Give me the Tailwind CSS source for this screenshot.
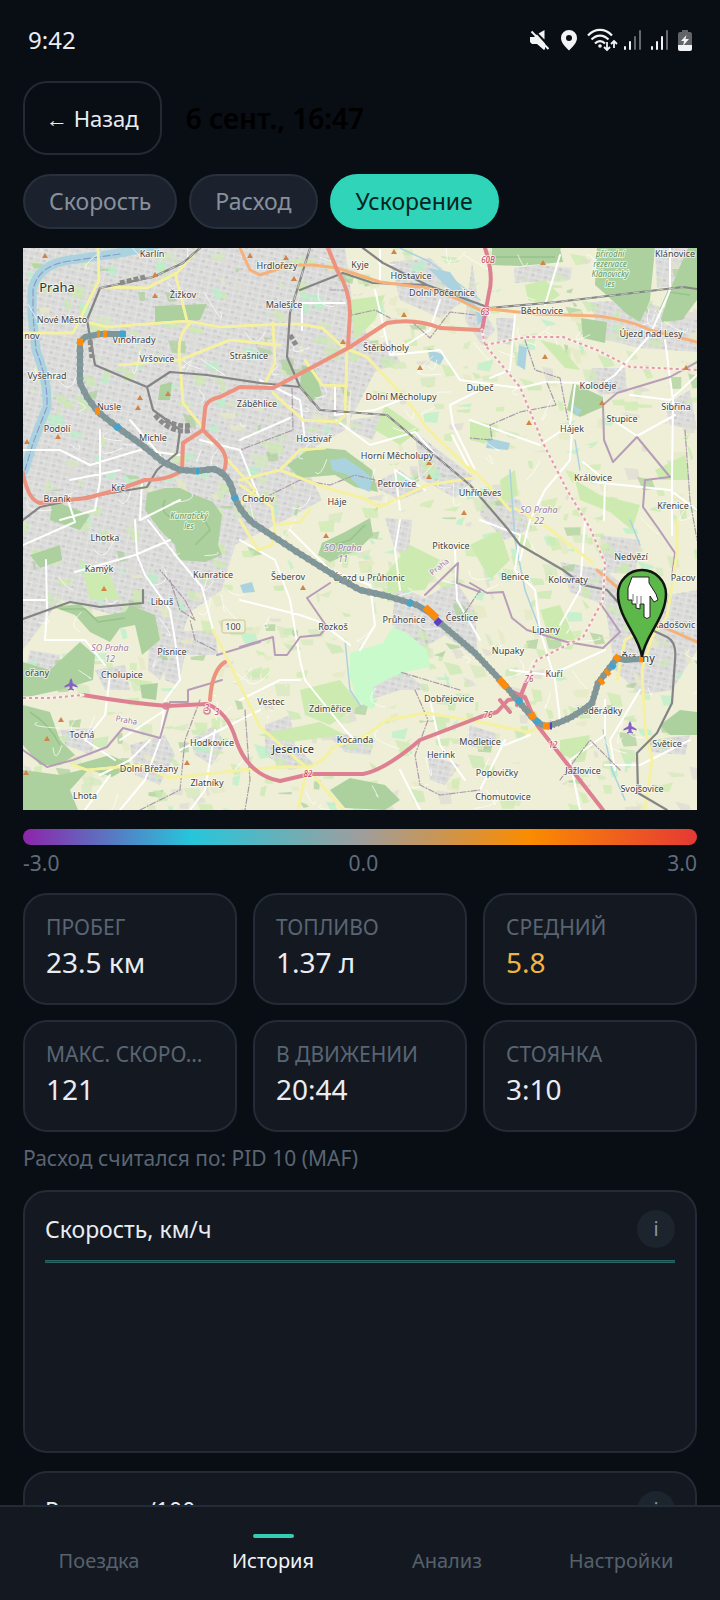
<!DOCTYPE html>
<html lang="ru">
<head>
  <meta charset="UTF-8">
  <meta name="viewport" content="width=device-width, initial-scale=1.0">
  <title>Поездка — 6 сент., 16:47</title>
  <script src="https://cdn.jsdelivr.net/npm/@tailwindcss/browser@4"></script>
</head>
<body class="bg-[#090d14] text-[#e9edf3] font-['Noto_Sans',sans-serif]">
<div class="h-screen flex flex-col overflow-hidden">

  <!-- status bar -->
  <div class="shrink-0 h-[81px] pb-[2px] pl-7 pr-[27px] flex items-center justify-between">
    <span class="text-2xl">9:42</span>
    <div class="flex items-center text-[#f1f3f5]">
      <svg class="w-[22px] h-6 mr-[10px]" viewBox="0 0 22 24" fill="currentColor">
        <path d="M1 9h4l3-2.500 8 9V21l-1 1-7-6H3l-2-2zM9.500 5.500 15.500 2v9.500z"/>
        <path d="M2.500 3.500 19.500 21" stroke="currentColor" stroke-width="2"/>
      </svg>
      <svg class="w-4 h-6 mr-[10px]" viewBox="0 0 16 24" fill="currentColor" fill-rule="evenodd">
        <path d="M8 2a8 8 0 0 1 8 8c0 4.500-4 8.500-8 12.500C4 18.500 0 14.500 0 10a8 8 0 0 1 8-8zm0 5a3 3 0 1 0 0 6 3 3 0 0 0 0-6z"/>
      </svg>
      <svg class="w-[31px] h-6 mr-[5px]" viewBox="0 0 31 24" fill="none" stroke="currentColor" stroke-width="2.200">
        <path d="M1 7.500c7-7.500 17-7.500 24 0M4.500 11.500c5-5.200 12-5.200 17 0M8 15.500c3-3.300 7-3.300 10 0"/>
        <circle cx="13" cy="18" r="1.800" fill="currentColor" stroke="none"/>
        <path d="M20 14v8m-3-3 3 3 3-3M27 20v-7m-3 3 3-3 3 3" stroke-width="1.800"/>
      </svg>
      <svg class="w-[19px] h-6 mr-2" viewBox="0 0 19 24" fill="currentColor">
        <rect x="1" y="18" width="2" height="4" rx="1"/><rect x="6" y="13" width="2" height="9" rx="1"/>
        <rect x="11" y="8" width="2" height="14" rx="1" opacity=".4"/><rect x="16" y="2" width="2" height="20" rx="1" opacity=".4"/>
      </svg>
      <svg class="w-[19px] h-6 mr-2" viewBox="0 0 19 24" fill="currentColor">
        <rect x="1" y="18" width="2" height="4" rx="1"/><rect x="6" y="13" width="2" height="9" rx="1"/>
        <rect x="11" y="8" width="2" height="14" rx="1"/><rect x="16" y="2" width="2" height="20" rx="1" opacity=".4"/>
      </svg>
      <svg class="w-4 h-6" viewBox="0 0 16 24" fill="currentColor">
        <path d="M5 2h6v2h2a2 2 0 0 1 2 2v14a2 2 0 0 1-2 2H3a2 2 0 0 1-2-2V6a2 2 0 0 1 2-2h2z" opacity=".38"/>
        <path d="M1 17h14v4a2 2 0 0 1-2 2H3a2 2 0 0 1-2-2z"/>
        <path d="M9.500 7 4 13h3l-1 5 6-7H8.500z"/>
      </svg>
    </div>
  </div>

  <main class="flex-1 min-h-0 overflow-y-auto [scrollbar-width:none] px-[23px]">
    <div class="flex items-center gap-6">
      <button class="h-[74px] px-[21px] border-2 border-[#222a33] rounded-3xl text-[22px]">← Назад</button>
      <h1 class="text-[28px] font-semibold text-black">6 сент., 16:47</h1>
    </div>

    <div class="flex gap-3 mt-[19px] text-[23px]">
      <button class="h-[55px] px-6 rounded-full border-2 border-[#27303b] bg-[#1c222d] text-[#87909d]">Скорость</button>
      <button class="h-[55px] px-6 rounded-full border-2 border-[#27303b] bg-[#1c222d] text-[#87909d]">Расход</button>
      <button class="h-[55px] px-6 rounded-full border-2 border-[#2fd4b9] bg-[#2fd4b9] text-[#06231f]">Ускорение</button>
    </div>

    <!-- map -->
    <svg class="block w-full mt-[19px] font-['Noto_Sans',sans-serif]" viewBox="23 248 674 562" role="img" aria-label="Карта поездки">
      <defs>
        <pattern id="streets" width="13" height="11" patternUnits="userSpaceOnUse" patternTransform="rotate(12)">
          <rect width="13" height="11" fill="#d8d8d7"/>
          <path d="M0 2h13M0 7h13M3 0v11M9 0v7" stroke="#e9e9e8" stroke-width=".8"/>
          <path d="M5 4h3M10 9h2" stroke="#c8c7c7" stroke-width="1.500"/>
        </pattern>
      </defs>
      <rect x="23" y="248" width="674" height="562" fill="#eeefd6"/>

      <g fill="url(#streets)">
        <path d="M23 248H345L352 300 372 345 352 380 345 430 300 455 322 500 285 520 235 545 222 590 190 612 180 640 160 680 148 670 150 625 60 600 23 650z"/>
        <path d="M390 262 430 258 455 280 465 300 440 318 400 300zM352 352 390 340 400 362 375 372 350 420 385 415 372 440 350 430zM415 432 475 478 455 498 420 478zM472 262 478 300 495 330 482 345 465 320zM514 268 540 265 572 268 570 280 515 283zM496 318 515 318 510 345 498 342zM590 302 640 300 697 320V352L640 348 600 338zM592 368 625 368 627 392 600 395 588 380zM655 248H688L680 285 657 288zM484 488 520 500 532 528 505 540 480 515zM665 405 690 390 697 430 670 425z"/>
        <path d="M560 562 605 570 640 600 697 590V650L672 690 640 695 615 670 605 605 570 592zM395 585 425 598 455 580 475 610 478 660 445 635 420 650 392 625zM370 685 405 672 428 690 400 690 370 700zM600 535 640 540 635 575 605 572zM370 485 400 470 425 490 400 500z"/>
        <path d="M160 632 215 630 218 655 185 655 178 685 165 680zM190 740 215 725 225 745 212 765 195 755zM130 745 165 735 175 755 160 785 135 775zM265 725 290 715 295 745 315 765 290 770 265 755zM30 650 60 655 58 670 23 680zM60 730 95 728 92 755 65 745zM428 755 460 765 445 785 430 780zM650 740 690 735 685 755 650 752zM322 730 375 740 370 755 345 752zM470 725 500 735 490 750 465 745zM95 670 125 665 130 690 105 690zM385 518 412 520 408 560 395 550z"/>
      </g>

      <g id="patches"></g>

      <g fill="#add19e">
        <path d="M597 248H655L650 300 640 322 628 315 612 300 595 285zM688 248H697V300L682 320 660 322 672 285zM492 248H560L563 262 520 266 492 265zM581 318 607 322 605 343 583 338zM573 383 603 397V407L580 417 567 410z"/>
        <path d="M147 493 165 488 180 488 195 495 213 502 222 515 218 545 222 555 205 562 178 560 175 545 160 530 145 510z"/>
        <path d="M287 465 312 447 345 450 372 470 378 492 355 487 335 475 300 478zM318 555 322 543 345 532 370 518 373 535 358 550 330 562zM53 607 80 604 95 617 125 612 130 605 155 615 160 640 142 655 135 625 120 628 110 642 90 632 75 615z"/>
        <path d="M23 662 50 670 80 642 95 655 93 680 60 690 23 698zM23 705 50 712 60 740 75 755 60 765 40 765 23 745zM23 770 60 775 90 768 70 790 78 810H23zM75 765 110 755 133 765 112 777zM330 790 350 778 385 785 400 800 385 810 345 808zM660 725 680 710 697 712V735L670 735zM155 306 207 304 200 320 155 322zM302 365 315 370 322 395 310 402 300 385zM160 385 172 382 170 400 158 400zM160 500 175 510 170 525 158 515zM140 685 158 683 156 700 142 698zM52 500 90 515 80 530 50 520zM30 555 60 545 62 560 40 568z"/>
      </g>
      <g fill="none" stroke="#97c28a" stroke-width="1.500">
        <path d="M165 500Q158 515 178 520L200 512 210 530 195 545M60 609 85 609 98 622 125 618M30 712Q50 725 60 745M495 257 555 257M660 310 668 292 690 295M325 548 350 540 365 525"/>
      </g>
      <g fill="#cdebb0">
        <path d="M350 300 385 295 375 320 355 340zM525 285 545 280 560 295 545 305 528 300zM540 340 560 345 580 370 565 368zM385 405 420 430 400 445 375 430zM300 690 340 680 360 705 330 725 305 715zM258 735 320 722 345 735 290 742zM470 545 500 530 510 560 490 580zM575 480 600 495 640 505 632 530 610 512 580 500zM540 610 560 605 575 640 550 640zM655 470 685 455 690 480 660 480zM470 420 495 425 490 445 470 440zM500 480 515 470 518 495 503 505zM560 740 590 735 585 760 560 755zM440 560 425 590 388 592 385 575 410 545zM80 560 110 575 120 600 90 600z"/>
      </g>
      <path d="M350 653 383 643 393 627 407 633 427 650 430 667 400 673 373 687V710L357 700 350 677z" fill="#c8facc"/>
      <g fill="#aad3df">
        <path d="M330 460 345 458 360 468 372 478 370 492 360 488 348 475 332 470zM519 345 527 348 525 370 517 365zM430 350 445 355 440 365 430 360zM488 438 510 443 508 450 486 448zM476 312 488 316 478 325zM240 585 252 582 255 592 243 593zM428 268 450 272 470 300 478 308 465 303 445 285zM572 405 582 410 577 416z"/>
      </g>
      <g fill="none" stroke-linecap="round" stroke-linejoin="round">
        <path d="M155 246 120 253 70 260Q38 264 32 290L32 315 36 350Q48 380 47 407L33 443 23 475" stroke="#aad3df" stroke-width="9"/>
        <path d="M120 254 70 261Q38 265 33 290L33 315 36 350Q48 380 47 407L33 443 25 470" stroke="#8e9ad0" stroke-width="1.200" stroke-dasharray="7 3"/>
        <path d="M480 300 430 262 400 248M510 470 515 540 525 590 540 630M575 440 580 470M630 520 640 545M345 640 350 690 362 708M603 730 612 770 625 800" stroke="#aad3df" stroke-width="1.500"/>

        <g stroke="#fff" stroke-width="2">
          <path d="M148 520 177 557 202 587 213 630M23 545 75 522 68 500M75 572 135 555 170 540M135 520 137 555 145 575 170 610 175 640 180 680 165 700 160 740 145 780 120 810M46 560 47 610 45 640 85 640 105 665M23 600 45 600M110 675 105 715 85 740 115 760M23 450 60 450 90 465 140 450 180 455M100 430 100 480 95 510 60 520M130 420 160 455M70 480 120 470M142 480 140 520 180 500M260 380 300 400 305 440M200 440 240 450 260 500M240 440 290 418M345 303H302V330M380 250V280M375 290 390 355 430 330 440 300M390 355 440 350 460 380 520 388 545 382 590 383M335 385 335 415 375 410 400 400M336 420 370 445 415 432 440 460M452 435 470 470M515 315 510 370 490 378M545 305 560 255M670 248V290L650 335 615 375 600 385M630 395 670 400 697 375M665 340 673 400 672 480 672 535M572 430 570 460 545 490 530 520 520 560M543 443 570 425 575 385M480 390 450 405 453 425 475 470M470 420 540 445M613 420 637 436 675 415M593 482 670 490 697 510M583 462 605 480 604 520M400 510 395 470 425 490M240 540 275 560 290 600 300 660 305 680 345 730 355 740M240 600 300 615 320 622 350 645M290 530 330 570 370 585 375 625 360 650M400 520 395 550 400 590M480 520 520 535 515 570 535 590 540 630 555 680 560 720M455 550 457 600 480 640M585 520 580 590 560 625M605 650 550 675 510 670M605 700 605 735 570 760 580 810M640 690 610 740 615 770M605 765 640 765 690 740M165 710 120 740M180 750 220 730 260 710M215 730 205 790 190 810M100 775 130 760 150 740M85 810 110 775M400 770 415 800 420 810M430 700 440 745 465 780M505 740 480 790M530 735 505 745M240 700 280 680 300 680"/>
        </g>
        <g id="lanes" stroke="#fff" stroke-width="1"></g>

        <path d="M697 362 670 377 617 393 603 405 604 440 613 462 637 437 670 477 645 480 643 507 658 528 675 553 672 577M470 583 487 593 503 592 512 618 527 630 567 642 603 648 620 632 600 603M480 592 457 583 458 563 425 595M240 647 273 637 275 655H287L300 637 320 635 327 627 307 598 330 583M217 655 260 642M23 750 47 767 73 760 107 747 123 728 160 738 170 702H188V690L222 680" stroke="#b79db8" stroke-width="2"/>
        <path d="M330 290H345L352 315 375 310 390 318M475 315 450 312 430 338 410 320M525 340 535 370 560 378 568 420M547 383 556 405 520 412 490 425 492 440 470 438M292 388 293 430 240 450M375 480 355 475 330 485 300 480 270 495M480 590 460 620M460 690 400 672M415 690 428 720 415 755 420 785 440 795 480 790M170 580 180 610 195 620 185 600 160 570M215 650 195 640 190 620M245 710 250 780 245 810M140 810 180 790 185 740 200 700M685 430 690 500 697 540M620 770 590 740 560 780" stroke="#a99aab" stroke-width="1.200" stroke-dasharray="6 2 1 2"/>

        <g stroke="#cfc878" stroke-width="3.500"><use href="#yellow"/></g>
        <path id="yellow" d="M98 248 99 280 83 313 73 333 23 333M197 250 177 273 147 288 103 287M175 273 187 321M87 322 107 327 187 321 220 327 260 325 300 324 322 328 343 347 367 357 407 400 427 428 473 473M470 467 490 487 510 510M515 508 547 527 593 563M190 324Q176 334 180 363L183 403 203 428M347 350 345 415 338 422 303 420 273 393M322 385 347 386M305 360 322 385M273 323 275 363 265 383M280 345 230 340 180 360 120 365M240 485 272 507 275 530M240 480 280 470 323 487 363 498 380 507 427 485 473 478M280 470 300 450 325 448M228 460 255 490 240 505M213 630 228 660 260 727 307 768 343 810M240 770 280 767 310 767Q325 760 333 747L363 737 387 720 427 713 480 722 527 732 540 728M260 768 170 778 140 765 87 770 73 765M307 768 298 810M677 520 677 553 667 617 652 637 642 670 645 727 652 760 645 810M275 530 272 545 258 550 240 520M275 525 300 522 310 510M617 680 625 640 642 630" stroke="#f5f1a0" stroke-width="2.600"/>

        <path d="M100 288 153 277 183 263 200 248M100 288 87 320 95 365 130 380 147 387 170 372 207 375 260 383 300 387 320 410 387 415 413 437 470 485 507 528 520 545 563 570 583 585 607 590 637 623 667 637Q677 642 675 660L672 703 657 733 637 753 638 793 667 810M310 248 290 313 287 357 300 387M300 290 343 273 373 283 427 285 490 308 557 302 683 287 697 289M363 248 383 263 427 285M147 387 153 410 180 430 177 453 157 470 147 487 87 497 40 507 23 520M23 619 70 602 100 607 143 603V590" stroke="#858585" stroke-width="2.200"/>
        <path d="M100 288 153 277 183 263 200 248M300 387 320 410 387 415 413 437 470 485M310 248 290 313M490 308 557 302 683 287" stroke="#c9c9c9" stroke-width="1" stroke-dasharray="6 6"/>
        <path d="M155 415Q172 435 192 430M165 420Q180 428 190 425M90 340 92 358M290 335 296 345M120 283 145 277" stroke="#8b8b8b" stroke-width="5" stroke-linecap="butt" stroke-dasharray="5 2"/>

        <path d="M240 248 250 270 260 275 290 265 313 265 337 268 380 282 427 288 453 297 480 310 490 309 537 314 597 316Q630 320 650 330L697 342M597 570 617 587 663 627 697 642" stroke="#f5b179" stroke-width="3"/>
        <path d="M480 330 440 328Q415 318 387 323L350 347 307 370 273 388 240 387 220 397Q205 400 205 410L203 430 183 443 182 470Q170 480 145 480L117 490 87 498 40 503Q28 500 23 473M203 430 220 447Q230 458 223 473M328 248 337 270Q350 290 350 313L348 347M225 662Q212 670 210 700" stroke="#ee9280" stroke-width="4"/>
        <path d="M485 248Q494 275 489 293L482 330M83 695Q130 703 167 706L207 704Q228 712 236 740 248 775 280 781L310 774H363Q385 770 420 740L480 717 497 712 508 700 525 697M508 690 525 697 537 725 603 810M527 680 517 705M510 712 500 700" stroke="#dd8091" stroke-width="4"/>
        <path d="M23 698 50 698 83 695M482 330 485 345 520 387 543 443 567 490 590 528 605 563 603 600 583 637 537 660 527 680M485 345 527 337 563 337 597 350 630 367 657 368 697 370" stroke="#f7f2ec" stroke-width="3"/>
        <path d="M23 698 50 698 83 695M482 330 485 345 520 387 543 443 567 490 590 528 605 563 603 600 583 637 537 660 527 680M485 345 527 337 563 337 597 350 630 367 657 368 697 370" stroke="#e59aa2" stroke-width="2" stroke-linecap="butt" stroke-dasharray="3 3"/>
        <circle cx="166" cy="706" r="3" stroke="#dd8091" stroke-width="1.500"/>
        <circle cx="207" cy="711" r="3" stroke="#dd8091" stroke-width="1.500"/>
      </g>

      <g id="peaks" fill="#d08445"></g>
      <rect x="222" y="620" width="23" height="13" rx="2" fill="#f3f0d0" stroke="#c9c4a0"/>
      <g fill="#8461c4">
        <path id="plane" d="m71 678 1.500 3v2l5 3v1.500l-5-1.500v2.500l1.500 1v1l-3-.800-3 .800v-1l1.500-1V686l-5 1.500V686l5-3v-2z"/>
        <use href="#plane" x="559" y="43"/>
      </g>
      <g id="labels" stroke="#fff" stroke-opacity=".65" stroke-width="2" stroke-linejoin="round" paint-order="stroke" text-anchor="middle"></g>

      <!-- trip track, coloured by acceleration -->
      <g fill="none">
        <path d="M126 334H100L85 337 80 342V383L87 397 98 412 117 427 142 445 163 462 180 470 197 471 213 469Q226 472 232 488 236 508 253 523L297 552 337 577 360 590 387 596 417 605 430 613 440 623 475 653 503 683 532 717Q540 726 548 726 572 720 592 703L598 683 617 658 625 660 642 659" stroke="#7b979b" stroke-width="6" stroke-linejoin="round"/>
        <path d="M80 342V383L87 397 98 412 117 427 142 445 163 462 180 470 197 471 213 469Q226 472 232 488 236 508 253 523L297 552 337 577 360 590 387 596 417 605" stroke="#8b9796" stroke-width="7" stroke-dasharray="2 5 3 4"/>
        <path d="M440 623 475 653 503 683 532 717Q540 726 548 726 572 720 592 703L598 683 617 658" stroke="#91938f" stroke-width="7" stroke-dasharray="2 4 1 3"/>
        <g stroke-width="7">
          <path d="M77 342h6M97 334h3M103 334h4M95 411h5M425 607 437 618M499 679 507 688M531 713 534 719M543 726h6M600 683 603 680M606 674 609 671M615 660 619 656M639 659h4" stroke="#fb8c0e"/>
          <path d="M116 425 119 429M120 334h5M234 496 236 500M408 602 412 604M517 699 521 703M611 668 614 664M535 720 539 723M196 471h3" stroke="#3fa5cf"/>
          <path d="M436 620 440 624M550 726h2" stroke="#5a40c8"/>
        </g>
      </g>

      <!-- finish marker -->
      <path d="M642 657C640 637 618 618 618 594a24 24 0 0 1 48 0C666 618 644 637 642 657z" fill="#5cb848" stroke="#101510" stroke-width="2.500"/>
      <path d="M632 577H649V583L656 594 658 600 654 602 650 596V617Q647 620 644 617V604H640V609L636 608V604H632V600H628V588z" fill="#fff" stroke="#222" stroke-width="1"/>
      <path d="M633 594v7M637 596v8M641 596v8" stroke="#777" stroke-width="1"/>
    </svg>

    <!-- colour scale -->
    <div class="mt-[19px] h-4 rounded-full bg-[linear-gradient(90deg,#8e24aa_0%,#26c6da_25%,#9e9e9e_50%,#fb8c00_75%,#e53935_100%)]"></div>
    <div class="flex justify-between mt-1 text-[21px] leading-7 text-[#5f6b79]">
      <span>-3.0</span><span>0.0</span><span>3.0</span>
    </div>

    <dl class="grid grid-cols-3 gap-x-4 gap-y-[15px] mt-4">
      <div class="h-[112px] rounded-3xl border-2 border-[#232c36] bg-[#141921] px-[21px] pt-[18px]">
        <dt class="text-[21px] leading-7 text-[#596573] whitespace-nowrap">ПРОБЕГ</dt>
        <dd class="text-[28px] leading-[42px] whitespace-nowrap">23.5 км</dd>
      </div>
      <div class="h-[112px] rounded-3xl border-2 border-[#232c36] bg-[#141921] px-[21px] pt-[18px]">
        <dt class="text-[21px] leading-7 text-[#596573] whitespace-nowrap">ТОПЛИВО</dt>
        <dd class="text-[28px] leading-[42px] whitespace-nowrap">1.37 л</dd>
      </div>
      <div class="h-[112px] rounded-3xl border-2 border-[#232c36] bg-[#141921] px-[21px] pt-[18px]">
        <dt class="text-[21px] leading-7 text-[#596573] whitespace-nowrap">СРЕДНИЙ</dt>
        <dd class="text-[28px] leading-[42px] whitespace-nowrap text-[#efb443]">5.8</dd>
      </div>
      <div class="h-[112px] rounded-3xl border-2 border-[#232c36] bg-[#141921] px-[21px] pt-[18px]">
        <dt class="text-[21px] leading-7 text-[#596573] whitespace-nowrap">МАКС. СКОРО…</dt>
        <dd class="text-[28px] leading-[42px] whitespace-nowrap">121</dd>
      </div>
      <div class="h-[112px] rounded-3xl border-2 border-[#232c36] bg-[#141921] px-[21px] pt-[18px]">
        <dt class="text-[21px] leading-7 text-[#596573] whitespace-nowrap">В ДВИЖЕНИИ</dt>
        <dd class="text-[28px] leading-[42px] whitespace-nowrap">20:44</dd>
      </div>
      <div class="h-[112px] rounded-3xl border-2 border-[#232c36] bg-[#141921] px-[21px] pt-[18px]">
        <dt class="text-[21px] leading-7 text-[#596573] whitespace-nowrap">СТОЯНКА</dt>
        <dd class="text-[28px] leading-[42px] whitespace-nowrap">3:10</dd>
      </div>
    </dl>

    <p class="mt-3 text-[21px] leading-7 text-[#596573]">Расход считался по: PID 10 (MAF)</p>

    <section class="mt-[18px] h-[263px] rounded-3xl border-2 border-[#232c36] bg-[#141921] px-5 pt-[18px]">
      <div class="flex items-center justify-between">
        <h2 class="text-[23px]">Скорость, км/ч</h2>
        <button class="size-[38px] rounded-full bg-[#1c242e] text-xl text-[#8b96a3]">i</button>
      </div>
      <div class="mt-3 h-[3px] border-y border-[#2b6566] bg-[#1c4449]"></div>
    </section>

    <section class="mt-[18px] h-[263px] rounded-3xl border-2 border-[#232c36] bg-[#141921] px-5 pt-[18px]">
      <div class="flex items-center justify-between">
        <h2 class="text-[23px]">Расход, л/100 км</h2>
        <button class="size-[38px] rounded-full bg-[#1c242e] text-xl text-[#8b96a3]">i</button>
      </div>
      <div class="mt-3 h-[3px] border-y border-[#2b6566] bg-[#1c4449]"></div>
    </section>
  </main>

  <nav class="shrink-0 h-[95px] border-t-2 border-[#232c36] bg-[#141921] px-3 grid grid-cols-4 text-xl text-[#56616d]">
    <a href="#" class="flex flex-col items-center pt-[27px] gap-[9px]"><span class="w-[41px] h-1"></span>Поездка</a>
    <a href="#" class="flex flex-col items-center pt-[27px] gap-[9px] text-[#f1f4f8]"><span class="w-[41px] h-1 rounded-full bg-[#35cdb2]"></span>История</a>
    <a href="#" class="flex flex-col items-center pt-[27px] gap-[9px]"><span class="w-[41px] h-1"></span>Анализ</a>
    <a href="#" class="flex flex-col items-center pt-[27px] gap-[9px]"><span class="w-[41px] h-1"></span>Настройки</a>
  </nav>
</div>

<script>
  const NS = 'http://www.w3.org/2000/svg';
  const add = (parent, tag, attrs, text) => {
    const el = document.createElementNS(NS, tag);
    for (const k in attrs) el.setAttribute(k, attrs[k]);
    if (text) el.textContent = text;
    document.getElementById(parent).appendChild(el);
  };

  // [name, x, y]
  const places = [
    ['Karlín', 152, 257], ['Žižkov', 183, 298], ['Nové Město', 62, 323], ['nov', 32, 339], ['Vinohrady', 134, 343],
    ['Vršovice', 157, 362], ['Vyšehrad', 47, 379], ['Nusle', 109, 410], ['Podolí', 57, 432], ['Michle', 153, 441],
    ['Krč', 118, 491], ['Braník', 57, 502], ['Hrdlořezy', 277, 269], ['Kyje', 360, 268], ['Hostavice', 411, 279],
    ['Dolní Počernice', 442, 296], ['Malešice', 284, 308], ['Strašnice', 249, 359], ['Štěrboholy', 386, 351],
    ['Dubeč', 480, 391], ['Dolní Měcholupy', 401, 400], ['Záběhlice', 257, 407], ['Hostivař', 314, 442],
    ['Horní Měcholupy', 397, 459], ['Petrovice', 397, 487], ['Uhříněves', 480, 496], ['Chodov', 258, 502],
    ['Háje', 337, 505], ['Klánovice', 675, 257], ['Běchovice', 542, 314], ['Újezd nad Lesy', 651, 337],
    ['Koloděje', 598, 389], ['Sibřina', 676, 410], ['Stupice', 622, 422], ['Hájek', 572, 432], ['Královice', 593, 481],
    ['Křenice', 673, 509], ['Lhotka', 105, 541], ['Kamýk', 99, 572], ['Kunratice', 213, 578], ['Libuš', 162, 605],
    ['100', 233, 630], ['Písnice', 172, 655], ['ořany', 37, 676], ['Cholupice', 122, 678], ['Točná', 82, 738],
    ['Hodkovice', 212, 746], ['Dolní Břežany', 149, 772], ['Zlatníky', 207, 786], ['Lhota', 85, 799],
    ['Pitkovice', 451, 549], ['Šeberov', 288, 580], ['Újezd u Průhonic', 369, 581], ['Rozkoš', 333, 630],
    ['Průhonice', 404, 623], ['Čestlice', 462, 621], ['Vestec', 271, 705], ['Zdiměřice', 330, 712],
    ['Dobřejovice', 449, 702], ['Kocanda', 355, 743], ['Herink', 441, 758], ['Modletice', 480, 745],
    ['Nedvězí', 631, 560], ['Benice', 515, 580], ['Kolovraty', 568, 583], ['Pacov', 683, 581], ['Lipany', 546, 633],
    ['Radošovic', 674, 628], ['Nupaky', 508, 654], ['Kuří', 554, 677], ['Voděrádky', 600, 714], ['Světice', 667, 747],
    ['Popovičky', 497, 776], ['Jažlovice', 583, 774], ['Svojšovice', 642, 792], ['Chomutovice', 503, 800]
  ];
  const towns = [['Praha', 57, 292, 13], ['Jesenice', 293, 753, 11], ['Říčany', 638, 662, 11]];
  const woods = [['přírodní', 610, 257], ['rezervace', 610, 267], ['Klánovický', 610, 277], ['les', 610, 287], ['Kunratický', 189, 519], ['les', 189, 529]];
  const districts = [['SO Praha', 539, 513], ['22', 539, 524], ['SO Praha', 110, 651], ['12', 110, 662], ['SO Praha', 343, 551], ['11', 343, 562]];
  const exits = [['60B', 488, 263], ['63', 485, 315], ['82', 308, 777], ['76', 529, 682], ['76', 488, 718], ['12', 553, 748], ['3', 207, 711], ['3', 217, 715]];
  const peaks = [
    [45, 256], [155, 275], [155, 296], [140, 398], [168, 394], [138, 408], [58, 437], [250, 256], [286, 258], [294, 279],
    [394, 252], [404, 315], [343, 342], [420, 368], [429, 463], [429, 477], [464, 513], [543, 263], [545, 357], [686, 368],
    [602, 403], [529, 423], [104, 589], [61, 720], [47, 739], [187, 763], [326, 536], [303, 588], [27, 442], [26, 773]
  ];

  // fixed seed so that the map keeps the same fields and lanes
  let seed = 7;
  const rnd = () => (seed = (seed * 16807) % 2147483647) / 2147483647;
  const tints = ['#cdebb0', '#cdebb0', '#c9e8b4', '#add19e', '#dfdcd6', '#d5e8c0', '#b9f0c8', '#e6e9c4'];
  for (let i = 0; i < 900; i++) {
    const x = 23 + rnd() * 674, y = 248 + rnd() * 562, w = 3 + rnd() * 14, h = 2 + rnd() * 10, s = rnd() * 8 - 4;
    add('patches', 'path', {
      d: `M${x} ${y}l${w} ${s}l${s} ${h}l${-w * 0.8} ${s / 2}z`,
      fill: tints[Math.floor(rnd() * tints.length)], opacity: 0.75
    });
  }
  for (let i = 0; i < 150; i++) {
    const x = 23 + rnd() * 674, y = 248 + rnd() * 562;
    add('lanes', 'path', { d: `M${x} ${y}q${rnd() * 30 - 15} ${rnd() * 20} ${rnd() * 50 - 25} ${rnd() * 40 - 20}`, opacity: 0.7 });
  }

  peaks.forEach(([x, y]) => add('peaks', 'path', { d: `M${x} ${y - 3}l3 5h-6z` }));
  places.forEach(([t, x, y]) => add('labels', 'text', { x, y, 'font-size': 9, fill: '#444' }, t));
  towns.forEach(([t, x, y, s]) => add('labels', 'text', { x, y, 'font-size': s, fill: '#333' }, t));
  woods.forEach(([t, x, y]) => add('labels', 'text', { x, y, 'font-size': 8, 'font-style': 'italic', fill: '#5f9a62' }, t));
  districts.forEach(([t, x, y]) => add('labels', 'text', { x, y, 'font-size': 9, 'font-style': 'italic', fill: '#a07ca6' }, t));
  exits.forEach(([t, x, y]) => add('labels', 'text', { x, y, 'font-size': 8, 'font-style': 'italic', fill: '#c8405a' }, t));
  add('labels', 'text', { x: 126, y: 723, 'font-size': 8, fill: '#a07ca6', transform: 'rotate(10 126 723)' }, 'Praha');
  add('labels', 'text', { x: 441, y: 569, 'font-size': 8, fill: '#a07ca6', transform: 'rotate(-38 441 569)' }, 'Praha');
</script>
</body>
</html>
